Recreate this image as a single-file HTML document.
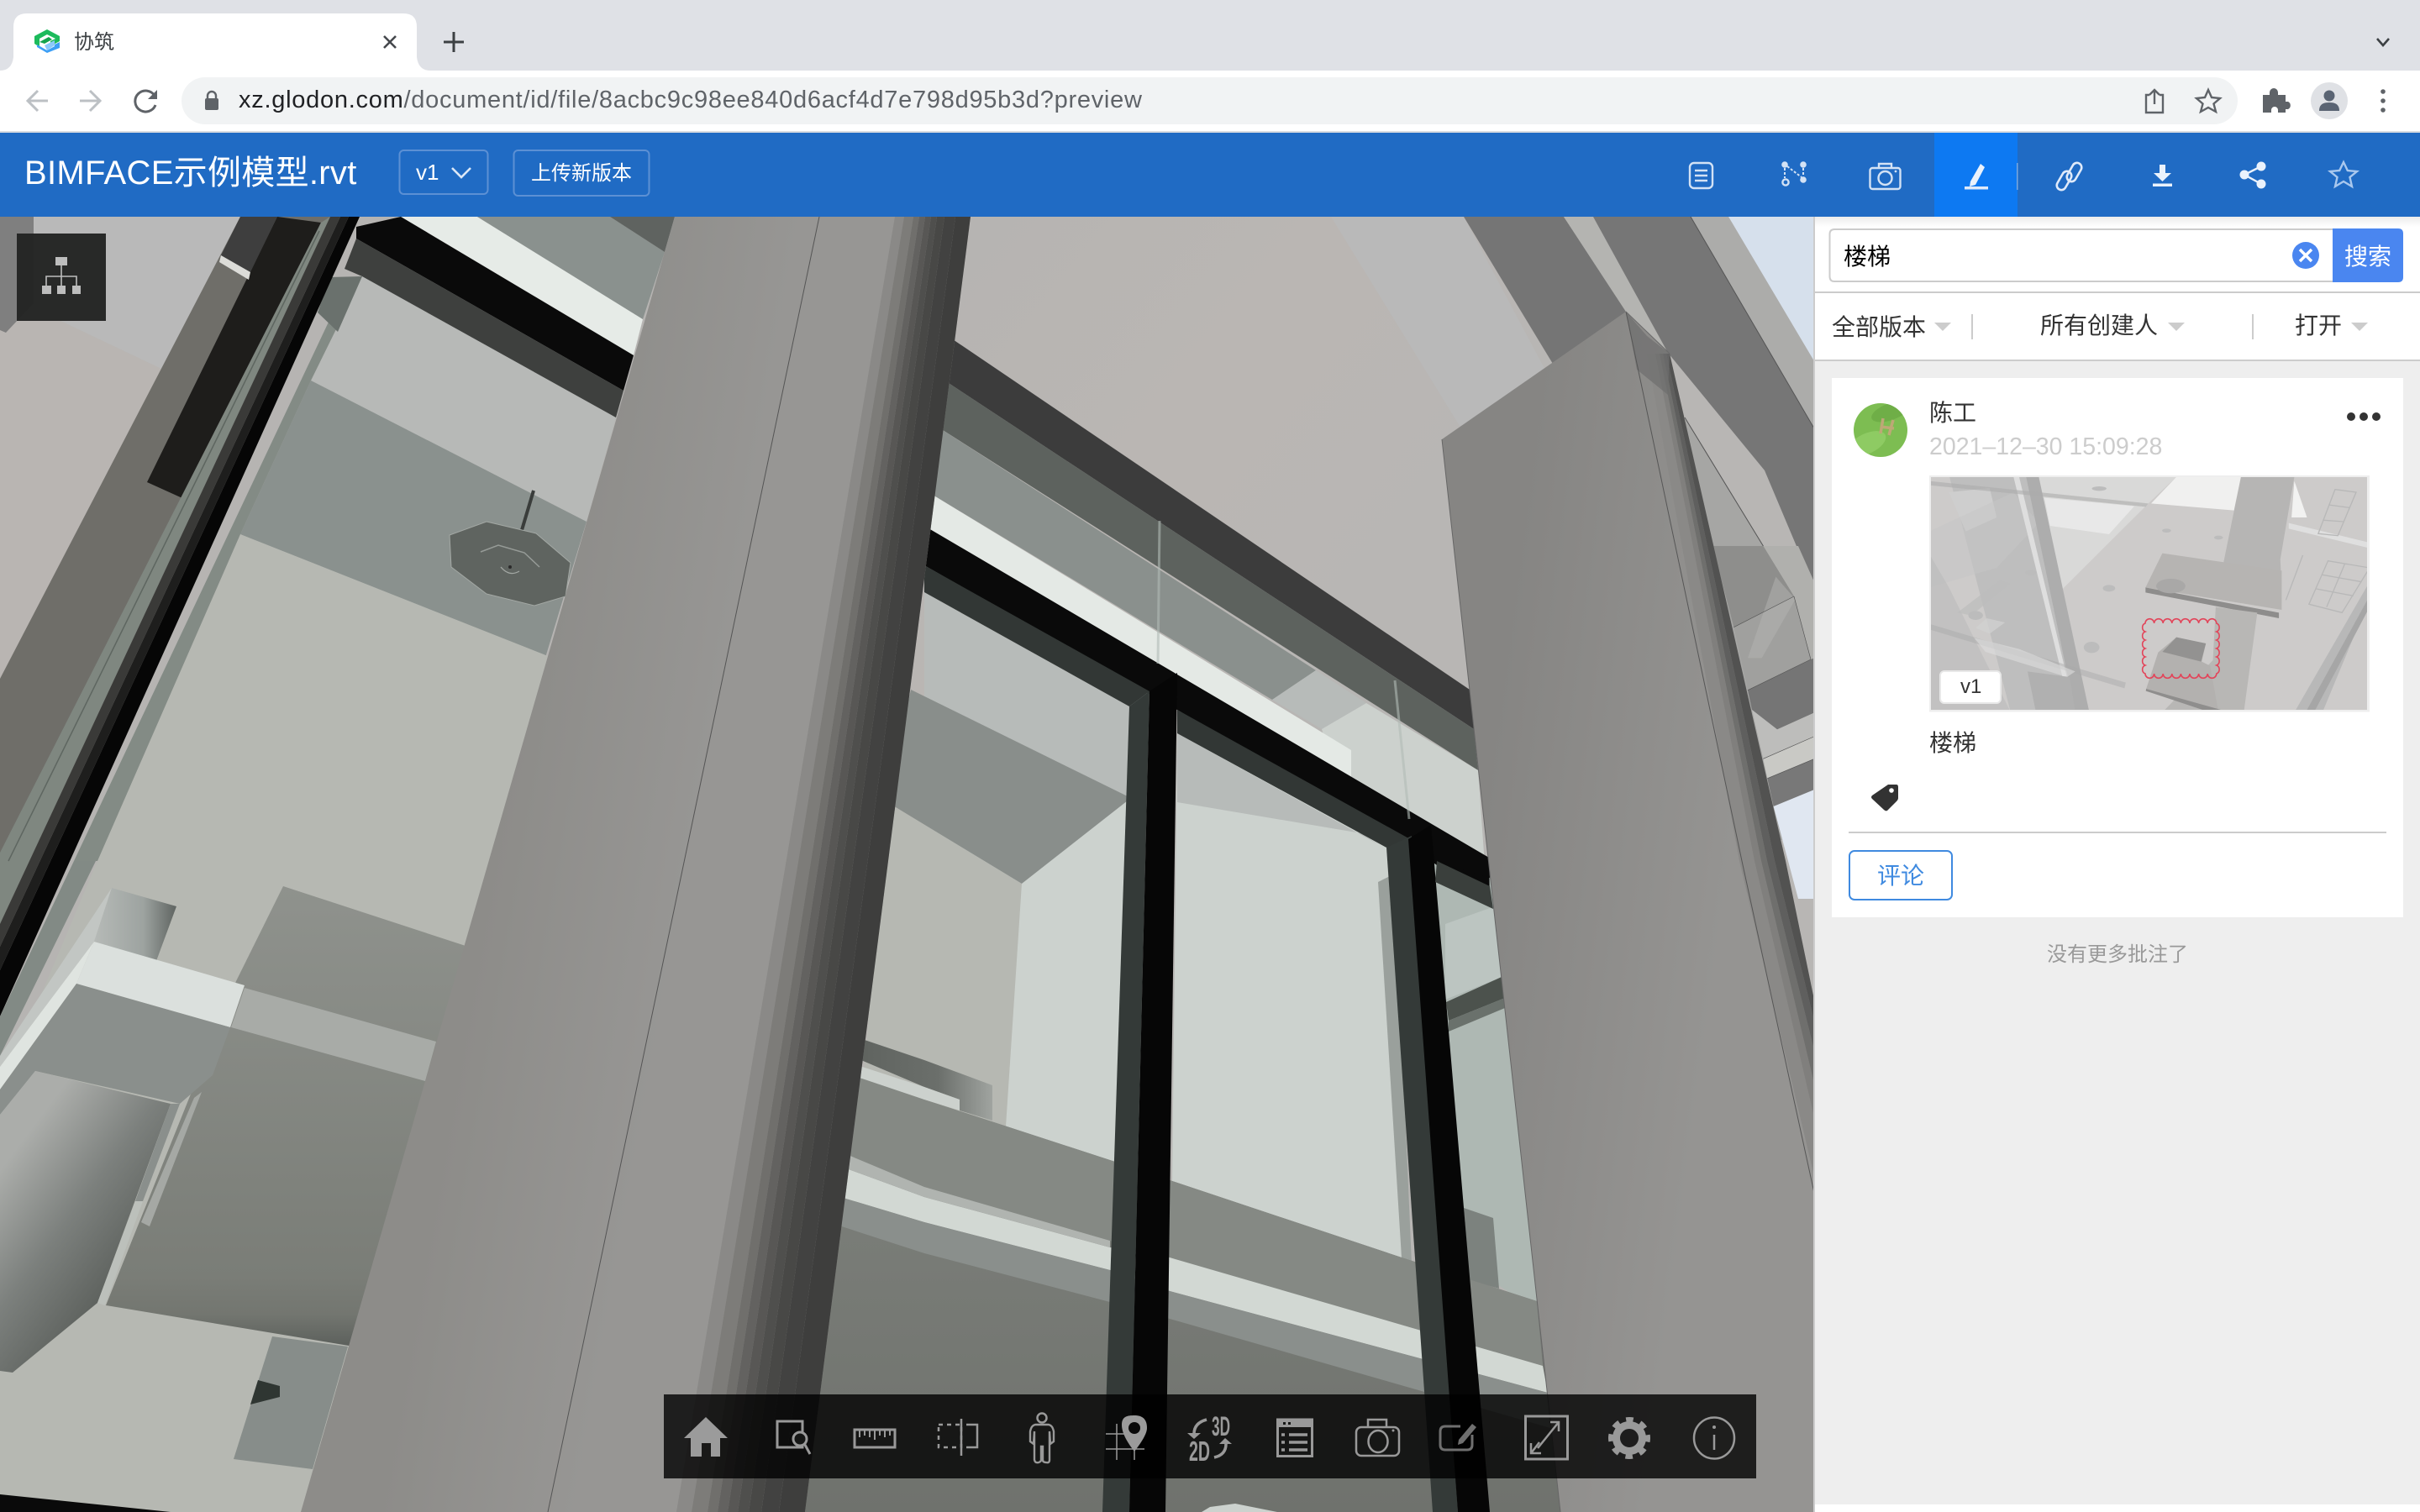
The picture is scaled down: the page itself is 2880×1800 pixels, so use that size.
<!DOCTYPE html>
<html lang="zh"><head><meta charset="utf-8"><title>协筑</title>
<style>
html,body{margin:0;padding:0;width:2880px;height:1800px;overflow:hidden;background:#fff}
body{position:relative;font-family:"Liberation Sans","Noto Sans CJK SC",sans-serif}
svg.full{position:absolute;left:0;top:0;display:block}
.t{position:absolute;white-space:nowrap;line-height:1}
</style></head><body>
<svg class="full" width="2880" height="1800" viewBox="0 0 2880 1800" xmlns="http://www.w3.org/2000/svg">
<defs>
<clipPath id="th"><rect x="2298" y="568" width="519" height="277"/></clipPath>
<clipPath id="view"><rect x="0" y="258" width="2159" height="1542"/></clipPath>
<clipPath id="av"><circle cx="2238" cy="512" r="32"/></clipPath>
<linearGradient id="gc1" gradientUnits="userSpaceOnUse" x1="590" y1="1000" x2="820" y2="1040"><stop offset="0" stop-color="#8d8c89"/><stop offset="1" stop-color="#979694"/></linearGradient>
<linearGradient id="gc2" gradientUnits="userSpaceOnUse" x1="1760" y1="1000" x2="2060" y2="1040"><stop offset="0" stop-color="#868583"/><stop offset="1" stop-color="#959492"/></linearGradient>
<linearGradient id="gbox" x1="0" y1="0" x2="0" y2="1"><stop offset="0" stop-color="#8f928d"/><stop offset=".85" stop-color="#7a7d77"/><stop offset=".93" stop-color="#737670"/><stop offset="1" stop-color="#5c605c"/></linearGradient>
<linearGradient id="gbl" gradientUnits="userSpaceOnUse" x1="10" y1="1380" x2="170" y2="1500"><stop offset="0" stop-color="#abadaa"/><stop offset=".5" stop-color="#7c807d"/><stop offset="1" stop-color="#5b5f5b"/></linearGradient>
<linearGradient id="gcy" x1="0" y1="0" x2="1" y2="0"><stop offset="0" stop-color="#b6bab7"/><stop offset=".6" stop-color="#9da3a0"/><stop offset="1" stop-color="#5f6461"/></linearGradient>
<linearGradient id="gbot" x1="0" y1="0" x2="0" y2="1"><stop offset="0" stop-color="#7f827d"/><stop offset="1" stop-color="#6f726d"/></linearGradient>
<linearGradient id="gwarm" gradientUnits="userSpaceOnUse" x1="1155" y1="258" x2="1700" y2="700"><stop offset="0" stop-color="#b6b4b2"/><stop offset=".5" stop-color="#bab6b3"/><stop offset="1" stop-color="#b8b6b4"/></linearGradient>
<linearGradient id="gshade" x1="0" y1="0" x2="0" y2="1"><stop offset="0" stop-color="#000" stop-opacity=".25"/><stop offset="1" stop-color="#000" stop-opacity="0"/></linearGradient>
<linearGradient id="gstub" x1="0" y1="0" x2="1" y2="0"><stop offset="0" stop-color="#5f635f"/><stop offset=".6" stop-color="#6b6f6b"/><stop offset="1" stop-color="#a0a4a0"/></linearGradient>
</defs>

<!-- browser chrome -->
<rect x="0" y="0" width="2880" height="84" fill="#dfe1e6"/>
<rect x="0" y="84" width="2880" height="72" fill="#fff"/>
<path d="M0,84 Q14,84 16,68 V32 Q16,16 32,16 H480 Q496,16 496,32 V68 Q498,84 512,84 Z" fill="#fff"/>
<rect x="0" y="156" width="2880" height="2" fill="#dadce0"/>
<rect x="216" y="92" width="2447" height="56" rx="28" fill="#f1f3f4"/>
<!-- favicon -->
<path d="M56,35 L71,43 V49 L60,55 V49 L66,46 L56,41 L47,46 V56 L41,52 V43Z" fill="#1dbb5c"/>
<path d="M47,50 L58,44 L62,47 L53,52Z" fill="#14a44e"/>
<path d="M71,50 V57 L56,63 L44,56 V53 L56,60 L65,55 V53Z" fill="#3d9ff5"/>
<path d="M53,54 L65,48 V54 L56,60Z" fill="#8cc9fa"/>
<!-- tab close and + -->
<path d="M457,43 L471,57 M471,43 L457,57" stroke="#45484d" stroke-width="2.6" fill="none"/>
<path d="M540,38 V62 M528,50 H552" stroke="#3c4043" stroke-width="3" fill="none"/>
<path d="M2829,46 L2836,54 L2843,46" stroke="#3c4043" stroke-width="2.6" fill="none"/>
<!-- nav -->
<path d="M57,120 H34 M45,108 L33,120 L45,132" stroke="#bcc0c4" stroke-width="3" fill="none"/>
<path d="M95,120 H118 M107,108 L119,120 L107,132" stroke="#bcc0c4" stroke-width="3" fill="none"/>
<path d="M184,114 A12.5,12.5 0 1 0 185,125" stroke="#5f6368" stroke-width="3" fill="none"/>
<path d="M187,107 V118 H176Z" fill="#5f6368"/>
<path d="M247,117 V114 A5,5 0 0 1 257,114 V117" stroke="#5f6368" stroke-width="2.4" fill="none"/>
<rect x="244" y="117" width="16" height="14" rx="2" fill="#5f6368"/>
<!-- address right icons -->
<path d="M2558,113 H2554 V134 H2574 V113 H2570 M2564,124 V107 M2558,113 L2564,107 L2570,113" stroke="#5f6368" stroke-width="2.4" fill="none"/>
<path d="M2628,107 L2632,116 L2642,117 L2634.5,123.5 L2637,133 L2628,128 L2619,133 L2621.5,123.5 L2614,117 L2624,116Z" stroke="#5f6368" stroke-width="2.4" fill="none"/>
<path d="M2693,113 H2701 V110 A5,5 0 0 1 2711,110 V113 H2720 V121 H2723 A5,5 0 0 1 2723,130 H2720 V134 H2711 V131 A4,4 0 0 0 2703,131 V134 H2693Z" fill="#5f6368"/>
<circle cx="2772" cy="120" r="22" fill="#dfe1e5"/>
<circle cx="2772" cy="114" r="6.5" fill="#5a6473"/>
<path d="M2760,132 C2760,124 2765,122 2772,122 C2779,122 2784,124 2784,132Z" fill="#5a6473"/>
<circle cx="2836" cy="109" r="2.8" fill="#5f6368"/><circle cx="2836" cy="120" r="2.8" fill="#5f6368"/><circle cx="2836" cy="131" r="2.8" fill="#5f6368"/>

<!-- header bar -->
<rect x="0" y="158" width="2880" height="100" fill="#206bc4"/>
<rect x="2302" y="158" width="99" height="100" fill="#0d79f2"/>
<rect x="2400" y="194" width="1.5" height="32" fill="#7aa9df"/>
<rect x="475.5" y="179" width="105" height="52" rx="5" fill="none" stroke="#5c90d4" stroke-width="2"/>
<rect x="611.5" y="179" width="161" height="54" rx="5" fill="none" stroke="#5c90d4" stroke-width="2"/>
<path d="M538,200 L549,211 L560,200" stroke="#dce8f7" stroke-width="2.6" fill="none"/>
<!-- header icons -->
<g stroke="#d3e2f5" fill="none" stroke-width="2.4">
<rect x="2011" y="194" width="27" height="30" rx="5"/>
<path d="M2017,203 H2032 M2017,209 H2032 M2017,215 H2032"/>
<circle cx="2124" cy="196" r="2.6" fill="#d3e2f5"/><circle cx="2146" cy="196" r="2.6" fill="#d3e2f5"/><circle cx="2125" cy="217" r="3.6"/><circle cx="2146" cy="214" r="2.6" fill="#d3e2f5"/>
<path d="M2124,200 V212 M2127,198 L2144,211 M2146,200 V210" stroke-dasharray="3 2" stroke-width="2"/>
<rect x="2225.5" y="200" width="36" height="25" rx="3"/>
<path d="M2236,200 V195 H2251 V200"/><ellipse cx="2243.5" cy="212" rx="8" ry="8"/>
</g>
<circle cx="2256" cy="204" r="1.4" fill="#d3e2f5"/>
<path d="M2345,216 L2357,195 L2362,199 L2351,220 L2344,222Z" fill="#eaf2fc"/>
<rect x="2338" y="222" width="28" height="3.5" fill="#dfeafa"/>
<g stroke="#dfeafa" fill="none" stroke-width="2.6">
<rect x="2463" y="193" width="11" height="24" rx="5.5" transform="rotate(30 2468.5 205)"/>
<rect x="2451" y="203" width="11" height="24" rx="5.5" transform="rotate(30 2456.5 215)"/>
</g>
<path d="M2570,196 H2577 V206 H2584 L2573.5,216 L2563,206 H2570Z" fill="#eaf2fc"/>
<rect x="2562" y="218.5" width="23" height="3.5" fill="#eaf2fc"/>
<g fill="#eaf2fc"><circle cx="2691" cy="198" r="5.5"/><circle cx="2671" cy="208" r="5.5"/><circle cx="2691" cy="219" r="5.5"/></g>
<path d="M2691,198 L2671,208 L2691,219" stroke="#eaf2fc" stroke-width="2.4" fill="none"/>
<path d="M2789,193 L2793.8,203 L2805,204 L2796.5,211 L2799,222 L2789,216 L2779,222 L2781.5,211 L2773,204 L2784.2,203Z" stroke="#a9c8ee" stroke-width="2.4" fill="none"/>

<!-- 3D scene -->
<g clip-path="url(#view)">
<rect x="0" y="258" width="2159" height="1542" fill="url(#gwarm)"/>
<!-- top right structure -->
<polygon points="1584,258 1742,258 1860,480 1737,507" fill="#b9b9b9"/>
<polygon points="2057,258 2159,258 2159,430" fill="#d6e0ec"/>
<polygon points="1742,258 1861,258 1935,371 1854,443" fill="#757575"/>
<polygon points="1861,258 1896,258 1987,421 1935,371" fill="#b4b4b1"/>
<polygon points="1896,258 2012,258 2159,510 2159,700 2100,560 1985,420" fill="#767676"/>
<polygon points="2012,258 2057,258 2159,430 2159,510" fill="#acacaa"/>
<polygon points="2005,497 2135,710 2159,790 2159,1000 2050,1000" fill="#a6a6a4"/>
<line x1="2012" y1="258" x2="2159" y2="510" stroke="#555" stroke-width="1"/>
<line x1="2005" y1="497" x2="2135" y2="710" stroke="#555" stroke-width="1"/>
<g transform="translate(1900 650) scale(.33333)">
<polygon points="415,0 595,0 705,180 490,290" fill="#8e8e8c"/>
<polygon points="490,290 705,180 765,405 540,515" fill="#a0a09e"/>
<polygon points="640,110 710,190 590,400 540,400" fill="#b4b4b2" opacity=".5"/>
<polygon points="595,0 720,0 778,130 778,600 765,405 705,180" fill="#b0b0ad"/>
<polygon points="540,515 765,405 778,400 778,595 645,655 555,585" fill="#757575"/>
<polygon points="555,585 645,655 778,595 778,680 595,760" fill="#bdbdbb"/>
<polygon points="595,760 778,680 778,760 610,830" fill="#c9c9c5"/>
<polygon points="610,830 778,760 778,870 632,930" fill="#787878"/>
<polygon points="632,930 778,870 778,1260 720,1260" fill="#e0e7f1"/>
<path d="M490,290 L705,180 M540,515 L765,405 M705,180 L765,405 M595,760 L778,680 M610,830 L778,760" stroke="#555" stroke-width="2" fill="none"/>
</g>

<!-- upper left of scene -->
<polygon points="40,258 286,258 194,440 28,361" fill="#b9b9b9"/>
<polygon points="28,361 194,440 0,808 0,345" fill="#b9b5b2"/>
<polygon points="0,258 40,258 40,361 7,396 0,393" fill="#7f7f7f"/>
<polygon points="286,258 393,258 0,1100 0,808" fill="#6f6e69"/>
<polygon points="330,258 382,265 228,598 175,574" fill="#1e1d1b"/>
<polygon points="286,258 330,258 298,324 263,304" fill="#3e3e3e"/>
<polygon points="263,304 298,324 296,333 261,312" fill="#dcdcd8"/>
<polygon points="382,265 393,258 35,1025 0,1100 0,1015" fill="#7f8780"/>
<line x1="380" y1="275" x2="10" y2="1025" stroke="#5e6660" stroke-width="1.5"/>

<!-- far walls -->
<polygon points="431,329 733,497 698,621 370,453" fill="#b7b9b7"/>
<polygon points="370,453 698,621 645,796 286,636" fill="#8a918e"/>
<polygon points="286,636 700,800 700,1800 0,1800 0,1300 116,1025" fill="#b6b8b2"/>
<polygon points="370,453 286,636 116,1025 88,1025 402,360 431,329" fill="#838b85"/>
<polygon points="392,330 431,329 402,395 378,372" fill="#6a716d"/>
<!-- mullion strips -->
<polygon points="393,258 405,258 0,1127 0,1100" fill="#3a3a38"/>
<polygon points="405,258 415,258 0,1155 0,1127" fill="#1e1e1d"/>
<polygon points="415,258 428,258 0,1210 0,1155" fill="#060606"/>
<polygon points="88,1025 114,1025 0,1257 0,1210" fill="#828a85"/>
<polygon points="133,1057 112,1121 0,1270 0,1257" fill="#c2c6c3"/>
<polygon points="112,1121 91,1171 0,1297 0,1270" fill="#dfe4e0"/>
<polygon points="477,258 568,258 765,380 754,423" fill="#e6ebe7"/>
<polygon points="424,270 477,258 754,423 742,465 424,284" fill="#0a0a0a"/>
<polygon points="424,284 742,465 733,497 431,329 410,320" fill="#3e403e"/>
<polygon points="568,258 726,258 791,300 765,380" fill="#8a918e"/>
<polygon points="726,258 803,258 791,300" fill="#5f6360"/>
<!-- sensor -->
<line x1="635" y1="584" x2="621" y2="631" stroke="#3a3d3b" stroke-width="4"/>
<polygon points="579,621 638,635 679,670 673,710 636,721 579,707 537,675 535,637" fill="#5f6460" stroke="#a3a8a4" stroke-width="1"/>
<path d="M572,657 L593,649 L624,658 L642,675" stroke="#969b97" stroke-width="1.5" fill="none"/>
<path d="M596,675 Q606,687 618,680" stroke="#a3a8a4" stroke-width="1.2" fill="none"/>
<circle cx="607" cy="675" r="2" fill="#2a2a2a"/>

<!-- centre bands -->
<polygon points="1100,381 1749,821 1754,868 1100,437" fill="#3c3c3c"/>
<polygon points="1100,437 1754,868 1759,917 1100,498" fill="#5d625e"/>
<polygon points="1100,498 1566,798 1514,833 1100,583" fill="#8a908d"/>
<polygon points="1566,798 1626,837 1573,868 1514,833" fill="#b7bbb9"/>
<polygon points="1626,837 1759,917 1772,1100 1640,1100 1573,868" fill="#ccd1cd"/>
<polygon points="1100,583 1608,893 1608,925 1100,630" fill="#e4e9e5"/>
<polygon points="1100,630 1100,705 1344,841 1342,1100 1100,1100" fill="#b7bbb9"/>
<polygon points="1084,821 1346,950 1216,1052 1056,955" fill="#898e8b"/>
<polygon points="1056,955 1216,1052 1197,1345 1022,1345" fill="#b6b8b2"/>
<polygon points="1216,1052 1346,950 1330,1400 1197,1341" fill="#ccd2ce"/>
<polygon points="1401,873 1650,1009 1668,1497 1395,1406" fill="#ccd2ce"/>
<polygon points="1401,873 1640,1005 1620,992 1401,955" fill="#b7bbb9"/>
<!-- window right -->
<polygon points="1640,1050 1660,1040 1680,1505 1668,1497" fill="#9aa09c"/>
<polygon points="1700,1025 1775,1025 1830,1560 1736,1500" fill="#aeb8b3"/>
<polygon points="1720,1100 1790,1075 1795,1160 1720,1190" fill="#bcc5c1"/>
<polygon points="1721,1193 1787,1163 1791,1188 1724,1215" fill="#4c524d"/>
<polygon points="1724,1215 1791,1188 1791,1200 1724,1228" fill="#6a716c"/>
<polygon points="1742,1438 1777,1450 1784,1534 1749,1524" fill="#7c827e"/>
<!-- stub and beams -->
<polygon points="1000,1272 1100,1309 1324,1382 1395,1406 1668,1497 1829,1549 1860,1800 560,1800 860,1300" fill="url(#gbot)"/>
<polygon points="1000,1272 1100,1309 1324,1382 1395,1406 1668,1497 1829,1549 1836,1626 1392,1497 1321,1477 1100,1413 950,1350" fill="#858984"/>
<polygon points="1020,1235 1100,1262 1181,1292 1181,1334 1142,1322 1142,1309 1100,1294 1020,1260" fill="url(#gstub)"/>
<polygon points="1020,1268 1100,1294 1142,1309 1142,1322 1100,1309 1020,1282" fill="#ccd1cd"/>
<polygon points="950,1370 1100,1425 1321,1485 1392,1497 1836,1626 1842,1658 1392,1537 1321,1512 1100,1455 950,1410" fill="#d2d8d3"/>
<polygon points="950,1350 1100,1413 1321,1477 1321,1485 1100,1425 950,1370" fill="#b0b4b0"/>
<polygon points="950,1410 1100,1455 1321,1512 1392,1537 1842,1658 1845,1700 1392,1570 1317,1549 1100,1492 940,1440" fill="#8a8f8c"/>
<polygon points="1440,1794 1470,1790 1520,1800 1430,1800" fill="#ccd2ce"/>
<!-- black bars -->
<polygon points="1100,626 1772,1021 1773,1075 1703,1025 1401,845 1100,673" fill="#0a0a0a"/>
<polygon points="1100,673 1368,823 1344,841 1100,705" fill="#323735"/>
<polygon points="1401,845 1680,1000 1650,1009 1401,873" fill="#323735"/>
<polygon points="1344,841 1368,823 1344,1800 1312,1800" fill="#343a38"/>
<polygon points="1368,823 1401,801 1387,1800 1344,1800" fill="#060606"/>
<polygon points="1650,1009 1680,995 1735,1800 1705,1800" fill="#343a38"/>
<polygon points="1676,999 1703,982 1773,1800 1735,1800" fill="#060606"/>
<polygon points="1703,982 1772,1021 1773,1045 1707,1025" fill="#0a0a0a"/>
<polygon points="1710,1025 1773,1055 1777,1082 1708,1050" fill="#3a3f3c"/>
<path d="M1380,620 L1378,790 M1660,810 L1677,975" stroke="#b0bbb6" stroke-width="3" opacity=".6" fill="none"/>

<!-- bottom left blocks -->
<polygon points="337,1055 554,1126 421,1603 126,1554 281,1168" fill="url(#gbox)"/>
<polygon points="291,1176 519,1240 506,1287 275,1223" fill="#a8aba7"/>
<polygon points="133,1057 210,1079 186,1144 112,1121" fill="url(#gcy)"/>
<polygon points="112,1121 291,1173 274,1223 91,1171" fill="#dbe0dd"/>
<polygon points="91,1171 274,1223 253,1280 214,1314 42,1275 0,1327 0,1297" fill="#8a8f8c"/>
<polygon points="42,1275 203,1314 116,1551 15,1634 0,1632 0,1327" fill="url(#gbl)"/>
<polygon points="203,1314 214,1314 170,1430 161,1430" fill="#8a8f8c"/>
<polygon points="161,1430 170,1430 125,1554 116,1551" fill="#bcc0bb"/>
<polygon points="231,1307 240,1300 178,1460 168,1455" fill="#a5a8a4"/>
<polygon points="324,1591 414,1603 372,1749 278,1737" fill="#878d8a"/>
<polygon points="307,1643 333,1650 333,1663 298,1672" fill="#2f3632"/>
<polygon points="0,1779 203,1800 0,1800" fill="#0a0a0a"/>

<!-- column 1 -->
<polygon points="803,258 1155,258 958,1800 358,1800" fill="url(#gc1)"/>
<polygon points="1065,258 1076,258 823,1800 805,1800" fill="#8a8987"/>
<polygon points="1076,258 1087,258 842,1800 823,1800" fill="#7d7c79"/>
<polygon points="1087,258 1094,258 854,1800 842,1800" fill="#706f6c"/>
<polygon points="1094,258 1101,258 866,1800 854,1800" fill="#636260"/>
<polygon points="1101,258 1108,258 878,1800 866,1800" fill="#585755"/>
<polygon points="1108,258 1115,258 891,1800 878,1800" fill="#4f4f4d"/>
<polygon points="1115,258 1124,258 906,1800 891,1800" fill="#484846"/>
<polygon points="1124,258 1137,258 927,1800 906,1800" fill="#424241"/>
<polygon points="1137,258 1155,258 958,1800 927,1800" fill="#3e3e3d"/>
<line x1="975" y1="258" x2="652" y2="1800" stroke="#555" stroke-width="1"/>

<!-- column 2 -->
<polygon points="1716,523 1935,371 1987,421 2125,1025 2159,1190 2159,1800 1857,1800" fill="url(#gc2)"/>
<polygon points="1960,421 1970,421 2088,1025 2159,1330 2159,1400 2070,1025" fill="#8a8987"/>
<polygon points="1970,421 1975,421 2096,1025 2159,1290 2159,1330 2088,1025" fill="#807f7d"/>
<polygon points="1975,421 1979,421 2103,1025 2159,1250 2159,1290 2096,1025" fill="#6f6f6d"/>
<polygon points="1979,421 1983,421 2112,1025 2159,1215 2159,1250 2103,1025" fill="#5f5f5e"/>
<polygon points="1983,421 1987,421 2125,1025 2159,1190 2159,1215 2112,1025" fill="#525251"/>
<polygon points="1935,371 1960,400 1987,421 1985,470 1948,440" fill="#6e6e6e" opacity=".7"/>
<path d="M1935,371 L2073,1025 L2159,1420" stroke="#565656" stroke-width="1" fill="none"/>
<path d="M1935,371 L1987,421" stroke="#6a6a6a" stroke-width="1" fill="none"/>
<line x1="1716" y1="523" x2="1857" y2="1800" stroke="#666" stroke-width="1"/>

<!-- tree button -->
<rect x="20" y="278" width="106" height="104" fill="#222322" opacity=".96"/>
<g fill="#bdbdbd"><rect x="66" y="306" width="14" height="10"/><rect x="50" y="340" width="11" height="10"/><rect x="68" y="340" width="10" height="10"/><rect x="86" y="340" width="10" height="10"/></g>
<path d="M73,316 V329 M55,340 V329 H91 V340 M73,329 V340" stroke="#bdbdbd" stroke-width="1.6" fill="none"/>
</g>

<!-- bottom toolbar -->
<rect x="790" y="1660" width="1300" height="100" fill="#000" opacity=".8"/>
<polygon points="840,1687 866,1712 857,1712 857,1734 846,1734 846,1718 835,1718 835,1734 822,1734 822,1712 814,1712" fill="#9b9b9b"/>
<g stroke="#999" fill="none" stroke-width="3">
<rect x="925" y="1692" width="30" height="31"/>
<circle cx="952" cy="1713" r="8" fill="#151615"/>
<path d="M958,1720 L964,1731"/>
<rect x="1017" y="1702" width="48" height="21"/>
<path d="M1023,1703 V1711 M1029,1703 V1709 M1035,1703 V1711 M1041,1703 V1714 M1047,1703 V1709 M1053,1703 V1711 M1059,1703 V1709" stroke-width="2"/>
<rect x="1117" y="1696" width="27" height="27" stroke-dasharray="5 5" stroke-width="2.5"/>
<path d="M1144,1689 V1733" stroke-width="2.5"/>
<path d="M1150,1696 H1163 V1723 H1150" stroke-width="2.5"/>
<circle cx="1240" cy="1688" r="5.5" stroke-width="2.5"/>
<path d="M1232,1696 C1228,1697 1227,1700 1226,1704 L1226,1716 L1230,1719 L1231,1704 V1738 Q1232,1742 1236,1741 Q1239,1740 1239,1738 V1722 H1241 V1738 Q1241,1741 1245,1741 Q1249,1742 1249,1738 V1704 L1250,1719 L1254,1716 V1704 C1253,1700 1252,1697 1248,1696Z" stroke-width="2.4"/>
<path d="M1329,1695 V1738 M1350,1722 V1738 M1316,1707 H1338 M1316,1725 H1362" stroke-width="1.5"/>
<path d="M1436,1690 Q1421,1694 1421,1707 M1445,1735 Q1459,1732 1459,1719" stroke-width="3.5"/>
<rect x="1520.5" y="1690" width="41" height="43.5"/>
<path d="M1534,1708 H1556 M1534,1717 H1556 M1534,1726 H1556" stroke-width="3.5"/>
<path d="M1525,1708 H1529 M1525,1717 H1529 M1525,1726 H1529" stroke-width="3.5"/>
<rect x="1614" y="1699" width="51" height="34" rx="6" stroke-width="2.5"/>
<path d="M1628,1699 V1690 H1650 V1699" stroke-width="2.5"/>
<ellipse cx="1640" cy="1716" rx="11.5" ry="13" stroke-width="2.5"/>
<path d="M1738,1698 H1720 Q1714,1698 1714,1704 V1720 Q1714,1726 1720,1726 H1746 Q1752,1726 1752,1720 V1708" stroke="#6f6f6f" stroke-width="3"/>
<rect x="1815.5" y="1686" width="50" height="51" stroke-width="3"/>
<path d="M1830,1724 L1855,1693 M1845,1693 H1855 V1704 M1822,1730 L1832,1717 M1822,1718 V1730 H1834" stroke-width="2.5"/>
<circle cx="1939" cy="1712" r="15.5" stroke-width="9"/>
<circle cx="1939" cy="1712" r="22" stroke-width="6" stroke-dasharray="8.5 8.78" stroke-dashoffset="4"/>
<ellipse cx="2040" cy="1712" rx="24" ry="24.5" stroke-width="2.5"/>
<path d="M2040,1708 V1726" stroke-width="2.5"/>
</g>
<circle cx="2040" cy="1699" r="2" fill="#999"/>
<path d="M1335,1696 C1335,1686 1342,1685 1350,1685 C1358,1685 1365,1688 1365,1700 C1365,1708 1356,1720 1350,1728 C1344,1720 1335,1708 1335,1696Z" fill="#9b9b9b"/>
<circle cx="1350" cy="1700" r="7" fill="#0a0a0a"/>
<path d="M1413,1706 L1429,1706 L1421,1713Z" fill="#999"/>
<path d="M1451,1719 L1466,1719 L1458,1712Z" fill="#999"/>
<text x="1442" y="1709" font-family="Liberation Sans" font-weight="bold" font-size="32" fill="#999" textLength="22" lengthAdjust="spacingAndGlyphs">3D</text>
<text x="1415" y="1739" font-family="Liberation Sans" font-weight="bold" font-size="33" fill="#999" textLength="25" lengthAdjust="spacingAndGlyphs">2D</text>
<rect x="1522" y="1691" width="38" height="8" fill="#999"/>
<rect x="1527" y="1693" width="3" height="3" fill="#151615"/><rect x="1533" y="1693" width="3" height="3" fill="#151615"/>
<circle cx="1658" cy="1703" r="1.5" fill="#999"/>
<polygon points="1736,1714 1752,1695 1757,1699 1741,1718 1735,1720" fill="#6f6f6f"/>

<!-- right panel -->
<rect x="2159" y="258" width="721" height="1542" fill="#eee"/>
<rect x="2159" y="258" width="721" height="172" fill="#fff"/>
<rect x="2159" y="258" width="721" height="12" fill="url(#gshade)" opacity=".3"/>
<rect x="2158" y="258" width="2" height="1542" fill="#ccc"/>
<rect x="2160" y="347" width="720" height="2" fill="#ccc"/>
<rect x="2160" y="428" width="720" height="2" fill="#ccc"/>
<rect x="2160" y="1791" width="720" height="9" fill="#fff"/>
<path d="M2777,273 H2183 Q2177.5,273 2177.5,279 V329 Q2177.5,335 2183,335 H2777" fill="#fff" stroke="#ccc" stroke-width="2"/>
<path d="M2776,272 H2854 Q2860,272 2860,278 V330 Q2860,336 2854,336 H2776Z" fill="#4a86f0"/>
<circle cx="2744" cy="304" r="16" fill="#4a86f0"/>
<path d="M2737,297 L2751,311 M2751,297 L2737,311" stroke="#fff" stroke-width="3.4"/>
<polygon points="2302,384 2322,384 2312,394" fill="#ccc"/>
<polygon points="2580,384 2600,384 2590,394" fill="#ccc"/>
<polygon points="2798,384 2818,384 2808,394" fill="#ccc"/>
<rect x="2346" y="374" width="2" height="30" fill="#ccc"/>
<rect x="2680" y="374" width="2" height="30" fill="#ccc"/>

<!-- card -->
<rect x="2180" y="450" width="680" height="642" fill="#fff"/>
<circle cx="2238" cy="512" r="32" fill="#7dbd52"/>
<g clip-path="url(#av)">
<ellipse cx="2222" cy="528" rx="24" ry="12" fill="#8ecb63" transform="rotate(-25 2222 528)"/>
<ellipse cx="2250" cy="490" rx="24" ry="10" fill="#6fae47" transform="rotate(-20 2250 490)"/>
</g>
<path d="M2241,498 L2238,516 M2253,500 L2248,518 M2238,508 L2254,510" stroke="#bda876" stroke-width="3.5" fill="none"/>
<circle cx="2798" cy="496" r="5" fill="#333"/><circle cx="2813" cy="496" r="5" fill="#333"/><circle cx="2828" cy="496" r="5" fill="#333"/>

<!-- thumbnail -->
<rect x="2296" y="566" width="524" height="281.5" fill="#eee"/>
<g clip-path="url(#th)"><g transform="translate(2296 566) scale(.3342 .33333)">
<rect x="0" y="0" width="1568" height="846" fill="#cdcbca"/>
<polygon points="300,5 880,5 780,100 480,400 300,600" fill="#d9d9d8"/>
<polygon points="410,80 730,110 640,210 430,180" fill="#e8e8e8"/>
<polygon points="880,5 1110,5 1085,125 790,100" fill="#f0f0ef"/>
<polygon points="1300,20 1345,150 1290,150" fill="#f2f2f1"/>
<polygon points="1110,5 1300,5 1250,300 1255,400 1048,310" fill="#b6b5b4"/>
<polygon points="830,278 1050,310 1255,340 1255,480 770,400" fill="#b6b4b2"/>
<polygon points="770,400 1245,490 1245,510 770,418" fill="#8e8d8c"/>
<polygon points="1020,470 1168,490 1120,846 830,846 1010,660" fill="#b8b7b5"/>
<polygon points="815,632 880,578 985,600 970,665 1000,680 1030,846 770,770" fill="#b3b1af"/>
<polygon points="830,630 880,578 985,600 968,665" fill="#939291"/>
<polygon points="772,762 1070,846 1000,846 772,770" fill="#8f8e8d"/>
<polygon points="72,5 360,5 570,846 290,846" fill="#bebebe"/>
<polygon points="70,60 215,45 240,150 130,200" fill="#cecece"/>
<polygon points="0,200 0,400 240,330 390,170 300,60" fill="#c6c6c6" opacity=".5"/>
<polygon points="0,280 0,846 290,846 70,400" fill="#b5b5b5" opacity=".45"/>
<polygon points="345,5 390,5 570,846 520,846" fill="#adadad"/>
<polygon points="300,5 320,5 520,846 505,846" fill="#dedede"/>
<polygon points="0,20 780,100 770,112 0,35" fill="#ababab" opacity=".6"/>
<polygon points="0,530 700,740 695,760 0,550" fill="#a8a8a8" opacity=".45"/>
<polygon points="160,580 320,620 520,700 490,720 200,630" fill="#dedede" opacity=".6"/>
<polygon points="350,700 500,720 520,846 380,846" fill="#b0b0b0"/>
<polygon points="1300,846 1568,380 1568,440 1400,846" fill="#b8b8b8"/>
<polygon points="1340,846 1568,430 1568,470 1370,846" fill="#a6a6a6"/>
<polygon points="1280,170 1568,240 1568,260 1280,190" fill="#dfdfdf"/>
<g stroke="#b8b8b8" stroke-width="4" fill="none"><path d="M1445,50 L1520,60 L1455,215 L1385,208Z M1422,105 L1495,115 M1405,160 L1475,165"/><path d="M1420,305 L1568,330 L1470,490 L1352,460Z M1400,355 L1540,380 M1378,405 L1510,430 M1480,315 L1415,470"/><path d="M1330,285 L1270,445"/></g>
<g fill="#bcbcbc"><ellipse cx="605" cy="47" rx="26" ry="8"/><ellipse cx="845" cy="197" rx="16" ry="7"/><ellipse cx="1030" cy="222" rx="16" ry="7"/><ellipse cx="640" cy="403" rx="22" ry="12"/><ellipse cx="578" cy="614" rx="28" ry="20"/><ellipse cx="362" cy="347" rx="20" ry="10"/><ellipse cx="860" cy="395" rx="52" ry="26" fill="#a9a8a7"/><ellipse cx="165" cy="500" rx="26" ry="16"/></g>
<polygon points="100,490 250,375 290,385 150,500" fill="#bcbcbc" opacity=".7"/>
<polygon points="165,545 205,510 270,525 215,565" fill="#d2d2d2" opacity=".7"/>
</g></g>
<path d="M2553,742 a5.3,5.3 0 0 1 10.6,0 a5.3,5.3 0 0 1 10.6,0 a5.3,5.3 0 0 1 10.6,0 a5.3,5.3 0 0 1 10.6,0 a5.3,5.3 0 0 1 10.6,0 a5.3,5.3 0 0 1 10.6,0 a5.3,5.3 0 0 1 10.6,0 a5.3,5.3 0 0 1 10.6,0 a5,5.3 0 0 1 0,10 a5,5.3 0 0 1 0,10 a5,5.3 0 0 1 0,10 a5,5.3 0 0 1 0,10 a5,5.3 0 0 1 0,10 a5,5.3 0 0 1 0,10 a5.3,5.3 0 0 1 -10.6,0 a5.3,5.3 0 0 1 -10.6,0 a5.3,5.3 0 0 1 -10.6,0 a5.3,5.3 0 0 1 -10.6,0 a5.3,5.3 0 0 1 -10.6,0 a5.3,5.3 0 0 1 -10.6,0 a5.3,5.3 0 0 1 -10.6,0 a5.3,5.3 0 0 1 -10.6,0 a5,5.3 0 0 1 0,-10 a5,5.3 0 0 1 0,-10 a5,5.3 0 0 1 0,-10 a5,5.3 0 0 1 0,-10 a5,5.3 0 0 1 0,-10 a5,5.3 0 0 1 0,-10Z" fill="none" stroke="#e2455a" stroke-width="1.6"/>
<rect x="2309" y="799" width="72" height="38" rx="5" fill="#fff" stroke="#e8e8e8" stroke-width="2"/>
<!-- tag -->
<path d="M2247,934 H2257 Q2259,934 2259,937 V950 Q2259,952 2257,954 L2246,965 Q2244,966 2242,964 L2228,951 Q2226,949 2228,947Z" fill="#333"/>
<circle cx="2251" cy="941" r="2.8" fill="#fff"/>
<rect x="2200" y="990" width="640" height="2" fill="#ccc"/>
<rect x="2201" y="1013" width="122" height="58" rx="6" fill="#fff" stroke="#3f8ae0" stroke-width="2"/>
</svg>

<div class="t" style="left:88px;top:39px;font-size:24px;color:#3c4043">协筑</div>
<div class="t" style="left:284px;top:105px;font-size:29px;color:#5f6368;letter-spacing:.73px"><span style="color:#202124">xz.glodon.com</span>/document/id/file/8acbc9c98ee840d6acf4d7e798d95b3d?preview</div>
<div class="t" style="left:29px;top:186px;font-size:40px;color:#fff;letter-spacing:.3px">BIMFACE示例模型.rvt</div>
<div class="t" style="left:495px;top:192px;font-size:26px;color:#fff">v1</div>
<div class="t" style="left:632px;top:195px;font-size:24px;color:#fff">上传新版本</div>
<div class="t" style="left:2194px;top:292px;font-size:28px;color:#000">楼梯</div>
<div class="t" style="left:2790px;top:292px;font-size:28px;color:#fff">搜索</div>
<div class="t" style="left:2180px;top:376px;font-size:28px;color:#333">全部版本</div>
<div class="t" style="left:2428px;top:374px;font-size:28px;color:#333">所有创建人</div>
<div class="t" style="left:2731px;top:374px;font-size:28px;color:#333">打开</div>
<div class="t" style="left:2296px;top:478px;font-size:28px;color:#333">陈工</div>
<div class="t" style="left:2296px;top:518px;font-size:28.5px;color:#ccc">2021–12–30 15:09:28</div>
<div class="t" style="left:2333px;top:806px;font-size:24px;color:#333">v1</div>
<div class="t" style="left:2296px;top:871px;font-size:28px;color:#333">楼梯</div>
<div class="t" style="left:2234px;top:1029px;font-size:28px;color:#3f8ae0">评论</div>
<div class="t" style="left:2436px;top:1125px;font-size:24px;color:#999">没有更多批注了</div>
</body></html>
